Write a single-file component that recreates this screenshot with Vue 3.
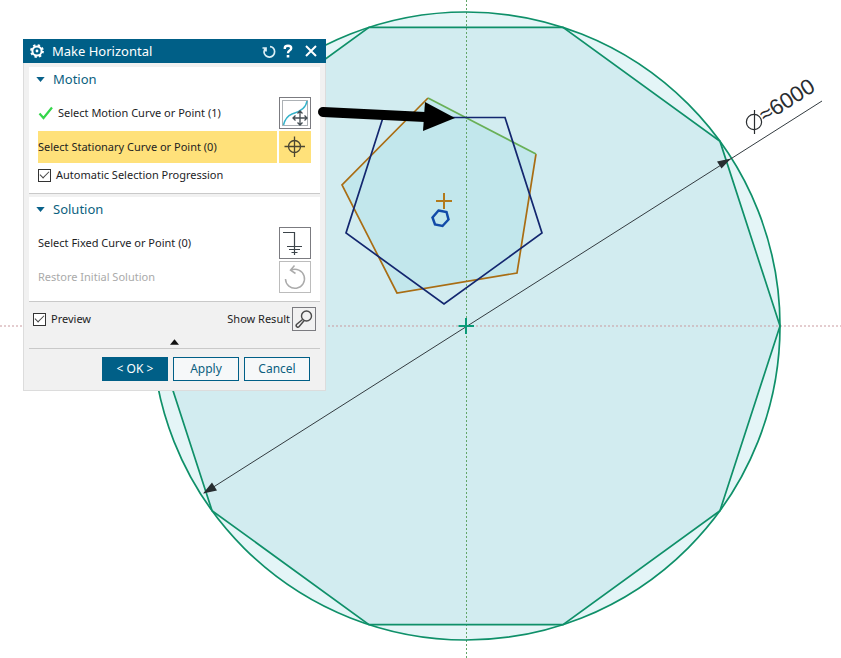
<script setup>
import { ref } from 'vue'

const motionOpen = ref(true)
const solutionOpen = ref(true)
const autoProgress = ref(true)
const preview = ref(true)

const center = { x: 466, y: 326 }
const radius = 314
const decagon = Array.from({ length: 10 }, (_, i) => {
  const a = (i * Math.PI) / 5
  return `${(center.x + radius * Math.cos(a)).toFixed(1)},${(center.y + radius * Math.sin(a)).toFixed(1)}`
}).join(' ')
</script>

<template>
  <main class="workspace">
    <svg class="sketch" viewBox="0 0 841 658" role="img" aria-label="Sketch view">
      <circle :cx="center.x" :cy="center.y" :r="radius" fill="#e4f5f7" />
      <polygon :points="decagon" fill="#d2ecf0" />
      <polygon points="428,98 536,154 517,273 397,293 342,185" fill="#c2e7ec" />
      <path d="M0 326H841" stroke="#c99a9f" stroke-dasharray="2 2" />
      <path d="M466.5 0V658" stroke="#62a568" stroke-dasharray="2 2" />
      <g fill="none" stroke="#0f9069" stroke-width="1.7">
        <circle :cx="center.x" :cy="center.y" :r="radius" />
        <polygon :points="decagon" />
      </g>
      <path d="M204 493L822 101" stroke="#333b40" stroke-width="1" />
      <path d="M203 493.500L212 482.500L217 490.500Z M731 158.500L721.500 168.500L717 161.500Z" fill="#272d30" />
      <path d="M458.500 326H474M466 318V334" stroke="#0a9a78" stroke-width="2" />
      <path d="M536 154L517 273L397 293L342 185L428 98" fill="none" stroke="#a96d13" stroke-width="1.7" />
      <path d="M428 98L536 154" stroke="#69b057" stroke-width="1.7" />
      <polygon points="383,117.500 505,117.500 542,233 444,304 346,233" fill="none" stroke="#13276f" stroke-width="1.7" />
      <path d="M436 201H452M444 193V209" stroke="#b27a1b" stroke-width="2" />
      <polygon points="438.500,210.500 446.500,212 448.500,219.500 442.500,226 435,224.500 432.500,217.500" fill="none" stroke="#124ba8" stroke-width="2.500" />
      <g fill="none" stroke="#292d30" stroke-width="1.200">
        <circle cx="754" cy="122" r="7.600" />
        <path d="M754.500 110V134" />
      </g>
      <text x="765" y="123" transform="rotate(-32.400 765 123)" class="dimension">≈6000</text>
    </svg>

    <section class="dialog" aria-labelledby="dialog-title">
      <header class="titlebar">
        <svg class="gear" viewBox="0 0 16 16" aria-hidden="true">
          <circle cx="8" cy="8" r="5.800" fill="none" stroke="#fff" stroke-width="2.200" stroke-dasharray="2.278 2.278" />
          <circle cx="8" cy="8" r="4.600" fill="none" stroke="#fff" stroke-width="2" />
          <circle cx="8" cy="8" r="1.400" fill="#fff" />
        </svg>
        <h1 id="dialog-title">Make Horizontal</h1>
        <button class="title-button" aria-label="Reset">
          <svg viewBox="0 0 16 16"><path d="M1.500 5H5V8.500M4.800 5.200A5.300 5.300 0 0 0 3 9A5.300 5.300 0 0 0 13.600 8.500A5 5 0 0 0 9 3.600" fill="none" stroke="#dceff5" stroke-width="1.700" /></svg>
        </button>
        <button class="title-button" aria-label="Help">
          <svg viewBox="0 0 16 16"><path d="M4.800 6V4.800Q5 2.800 8 2.800Q11.200 2.800 11.200 5.200Q11.200 6.700 9.300 7.700Q8 8.500 8 10.200" fill="none" stroke="#fff" stroke-width="2.400" /><path d="M6.700 12H9.300V14.500H6.700Z" fill="#fff" /></svg>
        </button>
        <button class="title-button wide" aria-label="Close">
          <svg viewBox="0 0 16 16"><path d="M3 3L13 13M13 3L3 13" stroke="#fff" stroke-width="2" /></svg>
        </button>
      </header>

      <div class="panels">
        <section class="panel">
          <button class="panel-head" :aria-expanded="motionOpen" @click="motionOpen = !motionOpen">
            <svg viewBox="0 0 10 6" aria-hidden="true"><path d="M0 0H10L5 6Z" fill="#08618a" /></svg>Motion
          </button>
          <div v-if="motionOpen" class="rows">
            <div class="row">
              <svg class="check" viewBox="0 0 16 16" aria-hidden="true"><path d="M1.500 8.500L5.500 13L14 2.500" fill="none" stroke="#35d64b" stroke-width="2.200" /></svg>
              <span class="row-label">Select Motion Curve or Point (1)</span>
              <button class="tool" aria-label="Motion curve">
                <svg viewBox="0 0 30 30" fill="none">
                  <rect x="2.500" y="2.500" width="25" height="25" stroke="#59636b" stroke-dasharray="1 1" />
                  <path d="M3.500 27C5 21 7 18 12 16C19 14 26 11 27 3" stroke="#35b3ca" stroke-width="1.500" />
                  <path d="M13 20H27M20 13V27M17.500 15.500L20 13L22.500 15.500M17.500 24.500L20 27L22.500 24.500M15.500 17.500L13 20L15.500 22.500M24.500 17.500L27 20L24.500 22.500" stroke="#444e54" stroke-width="1.300" />
                </svg>
              </button>
            </div>
            <div class="row">
              <span class="row-label active">Select Stationary Curve or Point (0)</span>
              <button class="tool active" aria-label="Stationary curve">
                <svg viewBox="0 0 30 30" fill="none" stroke="#4b4632" stroke-width="1.300"><circle cx="14.500" cy="14.500" r="6" /><path d="M4.500 14.500H25M14.500 4.500V25" /></svg>
              </button>
            </div>
            <label class="tick auto"><input v-model="autoProgress" type="checkbox" />Automatic Selection Progression</label>
          </div>
        </section>

        <section class="panel">
          <button class="panel-head" :aria-expanded="solutionOpen" @click="solutionOpen = !solutionOpen">
            <svg viewBox="0 0 10 6" aria-hidden="true"><path d="M0 0H10L5 6Z" fill="#08618a" /></svg>Solution
          </button>
          <div v-if="solutionOpen" class="rows">
            <div class="row">
              <span class="row-label">Select Fixed Curve or Point (0)</span>
              <button class="tool" aria-label="Fixed curve">
                <svg viewBox="0 0 30 30" fill="none" stroke="#3c444a" stroke-width="1.200"><path d="M3 4.500H14.500V27M7 18.500H22M9 21.500H20M11.500 24.500H17.500" /></svg>
              </button>
            </div>
            <div class="row">
              <span class="row-label muted">Restore Initial Solution</span>
              <button class="tool muted" disabled aria-label="Restore">
                <svg viewBox="0 0 30 30" fill="none" stroke="#ababab" stroke-width="1.500"><path d="M5.500 17A9.500 9.500 0 1 0 11 8.200M14.500 3.500L10.500 8.200L15.500 11.500" /></svg>
              </button>
            </div>
          </div>
        </section>
      </div>

      <div class="preview-row">
        <label class="tick"><input v-model="preview" type="checkbox" />Preview</label>
        <span class="result-label" id="result-label">Show Result</span>
        <button class="tool small" aria-labelledby="result-label">
          <svg viewBox="0 0 22 22" fill="none" stroke="#4a4a4a" stroke-width="1.400"><circle cx="13.500" cy="8" r="5" /><path d="M9.500 11.500L3.500 16.500Q2.500 18 4 19Q5.300 19.500 6.200 18.500L11 12.700" /></svg>
        </button>
      </div>

      <button class="collapse" aria-label="Collapse">
        <svg viewBox="0 0 10 6"><path d="M0 6H10L5 0Z" fill="#111" /></svg>
      </button>

      <footer class="actions">
        <button class="action primary">&lt; OK &gt;</button>
        <button class="action">Apply</button>
        <button class="action">Cancel</button>
      </footer>
    </section>

    <svg class="pointer" viewBox="0 0 841 658" aria-hidden="true">
      <path d="M323 112L425 117" stroke="#000" stroke-width="10" stroke-linecap="round" />
      <path d="M425 102L455 118L423 131Z" fill="#000" />
    </svg>
  </main>
</template>

<style>
body {
  background: #fff;
}
</style>

<style scoped>
.workspace {
  position: relative;
  overflow: hidden;
  font-family: "Noto Sans", "Open Sans", sans-serif;
  font-size: 11px;
  line-height: 16px;
  color: #1d1d1f;
}
.workspace *,
.workspace *::before {
  box-sizing: border-box;
}
.sketch {
  display: block;
  width: 100%;
}
.pointer {
  position: absolute;
  inset: 0;
  width: 100%;
  pointer-events: none;
}
.dimension {
  font-family: "Liberation Sans", sans-serif;
  font-size: 22px;
  fill: #292d30;
}
button {
  margin: 0;
  padding: 0;
  border: 0;
  background: none;
  color: inherit;
  font: inherit;
}
svg {
  display: block;
}
.dialog {
  position: absolute;
  top: 39px;
  left: 23px;
  width: 303px;
  background: #f1f1f1;
  border: 1px solid #dcdcdc;
  border-top: 0;
}
.titlebar {
  display: flex;
  align-items: center;
  gap: 3px;
  height: 24px;
  margin: 0 -1px;
  padding: 0 7px 0 6px;
  background: #005f87;
  color: #fff;
}
.gear {
  width: 16px;
  height: 16px;
}
h1 {
  flex: 1;
  margin: 0 0 0 4px;
  font-size: 13px;
  font-weight: 400;
}
.title-button {
  width: 16px;
  height: 16px;
}
.title-button.wide {
  margin-left: 4px;
}
.panels {
  display: flex;
  flex-direction: column;
  gap: 3px;
  padding: 4px 5px 0;
}
.panel {
  background: #fff;
  border-bottom: 1px solid #c9c9c9;
}
.panel-head {
  display: flex;
  align-items: center;
  gap: 8px;
  width: 100%;
  height: 24px;
  padding-left: 7px;
  color: #0b5f80;
  font-size: 13px;
}
.panel-head svg {
  width: 9px;
  height: 5px;
}
.rows {
  display: flex;
  flex-direction: column;
  gap: 2px;
  padding: 6px 9px 8px;
}
.row {
  display: flex;
  align-items: center;
  gap: 2px;
}
.check {
  width: 16px;
  height: 16px;
  margin-right: 2px;
}
.row-label {
  flex: 1;
  line-height: 32px;
}
.row-label.active {
  background: #ffe17a;
}
.row-label.muted {
  color: #aaa;
}
.tool {
  width: 32px;
  height: 32px;
  border: 1px solid #7b7b80;
  background: #fff;
}
.tool.active {
  border-color: #ffe17a;
  background: #ffe17a;
}
.tool.muted {
  border-color: #bcbcbc;
}
.tool.small {
  width: 24px;
  height: 24px;
  background: #f1f1f1;
}
.tick {
  display: flex;
  align-items: center;
  gap: 5px;
}
.auto {
  height: 20px;
}
input {
  appearance: none;
  display: grid;
  place-items: center;
  width: 13px;
  height: 13px;
  margin: 0;
  border: 1px solid #333;
  background: #fff;
}
input:checked::before {
  content: "";
  width: 9px;
  height: 5px;
  margin-bottom: 3px;
  border: solid #444;
  border-width: 0 0 1px 1px;
  transform: rotate(-45deg);
}
.preview-row {
  display: flex;
  align-items: center;
  gap: 2px;
  padding: 5px 9px 0;
}
.result-label {
  margin-left: auto;
}
.collapse {
  display: block;
  width: 100%;
  height: 17px;
  padding-top: 5px;
}
.collapse svg {
  width: 9px;
  height: 6px;
  margin: 0 auto;
}
.actions {
  display: flex;
  justify-content: flex-end;
  gap: 5px;
  margin: 0 5px;
  padding: 8px 10px 9px;
  border-top: 1px solid #c9c9c9;
}
.action {
  width: 66px;
  height: 24px;
  border: 1px solid #005f87;
  color: #0b5f80;
  background: #f6f8f9;
  font-size: 12px;
}
.action.primary {
  background: #005f87;
  color: #fff;
}
</style>
